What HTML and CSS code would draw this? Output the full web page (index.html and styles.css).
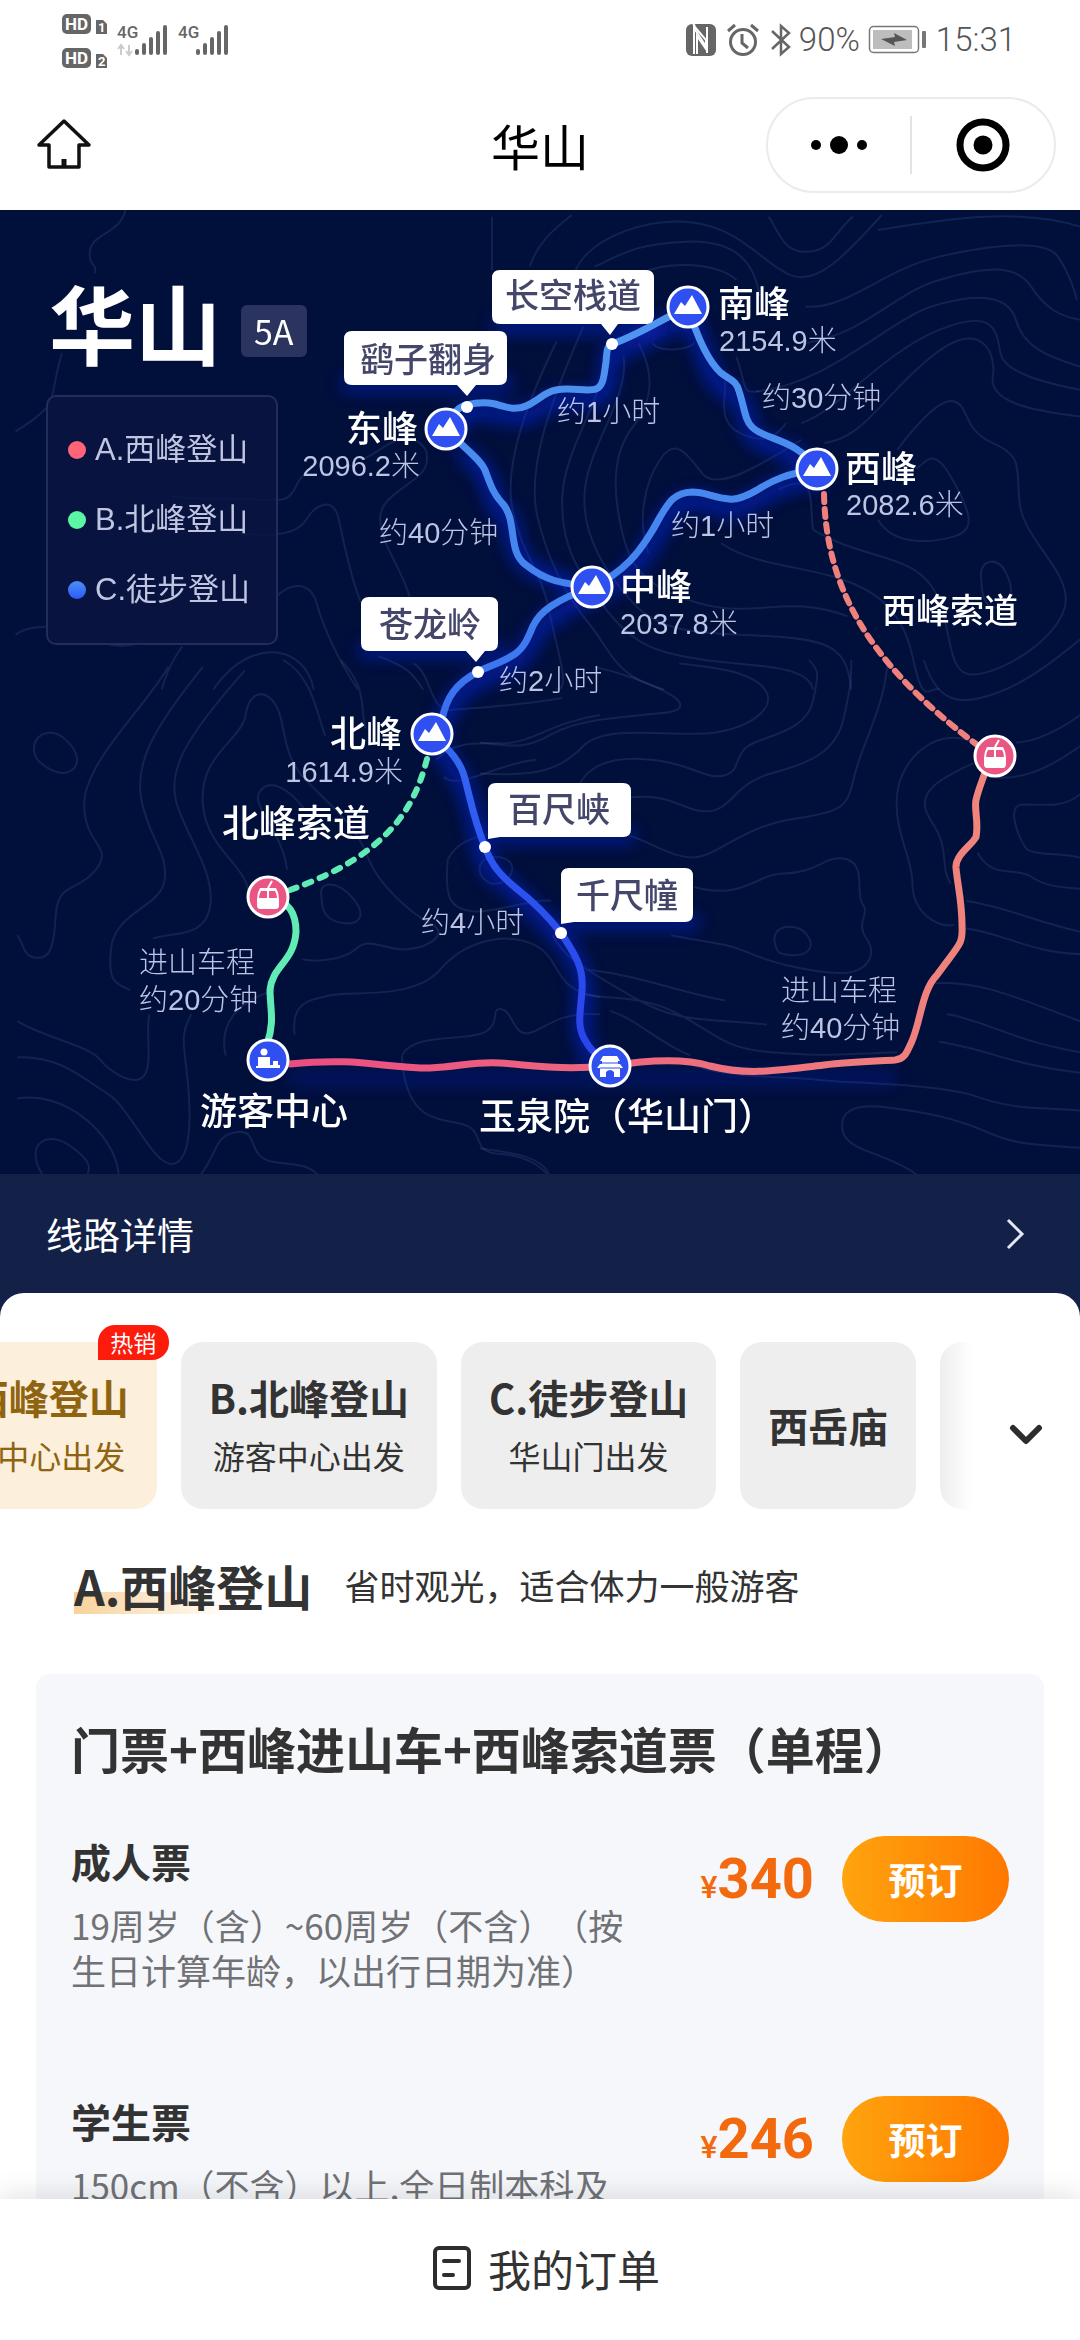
FILE: index.html
```html
<!DOCTYPE html>
<html lang="zh-CN">
<head>
<meta charset="utf-8">
<meta name="viewport" content="width=device-width, initial-scale=1">
<title>华山</title>
<link rel="stylesheet" href="styles.css">
</head>
<body>
<div class="app">
  <header>
    <div class="status">
      <svg class="status-left" width="172" height="60" viewBox="60 10 172 60" role="img" aria-label="信号">
        <g fill="#666">
          <rect x="62" y="14" width="29" height="20" rx="5"/>
          <path d="M96 20h7l4 4v10H96z"/>
          <rect x="62" y="48" width="29" height="20" rx="5"/>
          <path d="M96 54h7l4 4v10H96z"/>
          <rect x="135" y="49" width="4" height="6" rx="2"/><rect x="142" y="43" width="4" height="12" rx="2"/><rect x="149" y="37" width="4" height="18" rx="2"/><rect x="156" y="31" width="4" height="24" rx="2"/><rect x="163" y="25" width="4" height="30" rx="2"/>
          <rect x="196" y="49" width="4" height="6" rx="2"/><rect x="203" y="43" width="4" height="12" rx="2"/><rect x="210" y="37" width="4" height="18" rx="2"/><rect x="217" y="31" width="4" height="24" rx="2"/><rect x="224" y="25" width="4" height="30" rx="2"/>
        </g>
        <path d="M121 55V46M118 49l3-4 3 4M129 45v9M126 51l3 4 3-4" fill="none" stroke="#ccc" stroke-width="2"/>
        <g class="signal-text">
          <text class="knock" x="65" y="30">HD</text><text class="knock" x="65" y="64">HD</text>
          <text class="knock sim" x="98" y="32">1</text><text class="knock sim" x="98" y="66">2</text>
          <text class="net" x="117" y="38">4G</text><text class="net" x="178" y="38">4G</text>
        </g>
      </svg>
      <div class="status-right">
        <svg width="32" height="34" viewBox="0 0 32 34"><rect x="1" y="1" width="30" height="32" rx="6" fill="#666"/><path d="M9 31V5l13 20V8M8 1l2 2M22 4v26" fill="none" stroke="#fff" stroke-width="2"/><path d="M9 3l12 14v9L12 13v18" fill="none" stroke="#fff" stroke-width="2"/></svg>
        <svg class="alarm" width="32" height="34" viewBox="0 0 32 34" fill="none" stroke="#666" stroke-width="3"><circle cx="16" cy="19" r="12.500"/><path d="M15 11v9l6 5M1 8l7-6M24 2l7 6"/></svg>
        <svg class="bt" width="20" height="34" viewBox="0 0 20 34" fill="none" stroke="#666" stroke-width="2.500"><path d="M1 8l17 16-8 7V3l8 7L1 26"/></svg>
        <span>90%</span>
        <svg class="battery" width="60" height="30" viewBox="0 0 60 30"><rect x="1.500" y="1.500" width="49" height="26" rx="4" fill="none" stroke="#777" stroke-width="1.500"/><rect x="5" y="5" width="39" height="19" fill="#bdbdbd"/><path d="M13 14l14-2-1-4 13 7-13 2 1 4z" fill="#555"/><rect x="54" y="6" width="4" height="17" rx="1" fill="#777"/></svg>
        <span>15:31</span>
      </div>
    </div>
    <div class="nav">
      <a class="home" href="#" aria-label="首页"><svg width="56" height="56" viewBox="36 118 56 56" fill="none" stroke="#111"><path d="M64 122L39 146H49V168H79V146H89Z" stroke-width="3.500" stroke-linejoin="round"/><path d="M64 160v8" stroke-width="5"/></svg></a>
      <h1>华山</h1>
      <div class="capsule">
        <button type="button" aria-label="更多"><svg width="60" height="24" viewBox="0 0 60 24"><circle cx="7" cy="12" r="5"/><circle cx="30" cy="12" r="9"/><circle cx="53" cy="12" r="5"/></svg></button>
        <button type="button" aria-label="关闭"><svg width="56" height="56" viewBox="0 0 56 56"><circle cx="28" cy="28" r="23" fill="none" stroke="#000" stroke-width="7"/><circle cx="28" cy="28" r="9.500"/></svg></button>
      </div>
    </div>
  </header>

  <main>
    <section class="map">
      <svg class="routes" viewBox="0 210 1080 964" role="img" aria-label="华山登山线路图">
        <defs>
          <linearGradient id="blue" gradientUnits="userSpaceOnUse" x1="0" y1="320" x2="0" y2="1040"><stop offset="0" stop-color="#4f95f0"/><stop offset=".4" stop-color="#4280ee"/><stop offset=".75" stop-color="#2b55f0"/><stop offset="1" stop-color="#2a45ea"/></linearGradient>
          <linearGradient id="red" gradientUnits="userSpaceOnUse" x1="290" y1="0" x2="980" y2="0"><stop offset="0" stop-color="#ea4d80"/><stop offset="1" stop-color="#f0857c"/></linearGradient>
          <filter id="glow" filterUnits="userSpaceOnUse" x="0" y="210" width="1080" height="964"><feGaussianBlur stdDeviation="9"/></filter>
          <g id="peak"><circle r="20" fill="#2f4ff0" stroke="#fff" stroke-width="3"/><path d="M-14 7L-7-5-3-1 4-12 14 7Z" fill="#fff"/></g>
          <g id="cable"><circle r="20" fill="#ea5583" stroke="#fff" stroke-width="3"/><path d="M0-9L4-16" stroke="#fff" stroke-width="2"/><path d="M-8-9H8Q11-4 11 2V8Q11 12 8 12H-8Q-11 12-11 8V2Q-11-4-8-9Z" fill="#fff"/><path d="M-7-6H-1V1H-9Q-9-3-7-6ZM7-6H1V1H9Q9-3 7-6Z" fill="#ea5583"/></g>
        </defs>
        <rect y="210" width="1080" height="964" fill="#010f3b"/>

        <g class="contour">
          <g transform="translate(0 210) scale(.344 .333)">
            <path d="M365 0C350 70 270 70 262 120S285 160 275 190M180 430C155 510 160 570 130 600S70 650 45 665M45 1275C80 1250 110 1255 140 1250M300 1300C340 1315 390 1310 420 1290"/>
            <path d="M800 1165C840 1120 900 1110 920 1180S970 1330 1040 1440M680 970C780 980 860 980 890 930S970 860 985 930 1020 1110 1050 1180M620 1440C700 1320 790 1320 830 1335S900 1380 912 1440M470 1440C490 1370 510 1340 530 1310M500 860C600 870 760 870 810 870S860 810 880 800M1050 750C1100 730 1120 700 1160 690S1250 700 1240 760 1100 850 1105 930 1170 1080 1190 1160M1430 20V180M1100 1340C1180 1370 1200 1390 1230 1440"/>
          </g>
          <g transform="translate(480 210) scale(.3827 .333)">
            <path d="M130 170C150 100 190 60 240 15M250 180C290 80 440 20 560 38S740 160 810 195 960 130 1050 15M300 170C360 140 400 100 540 95S720 170 730 260M420 190C500 150 620 160 670 210M755 20C790 90 800 130 860 125S930 60 975 20M1040 60C1200 30 1400 -10 1568 50"/>
            <path d="M850 290C960 300 1050 180 1200 140S1480 90 1510 140 1550 230 1560 270M850 400C1010 370 1080 250 1200 210S1400 160 1440 230 1520 320 1568 330M720 545C900 530 1070 330 1180 290S1380 250 1400 330 1480 440 1568 470M840 640C940 600 1050 430 1200 360S1350 370 1360 430 1480 520 1568 540M900 700C1010 680 1050 560 1180 440S1350 430 1340 500 1420 600 1568 620"/>
            <path d="M200 395C130 560 60 760 85 900S160 1080 180 1200 240 1440 200 1440M270 350C190 560 120 770 150 920S240 1180 290 1250 350 1400 480 1440M330 440C320 570 220 720 215 860S250 1080 330 1200 480 1330 580 1350 860 1360 870 1440M375 440C390 560 290 700 275 830S320 1080 400 1180 600 1270 760 1280 960 1320 970 1440M415 400C450 480 460 560 400 650S350 860 370 960 420 1130 570 1180 800 1150 960 1220M450 400C470 430 540 420 560 400M640 480C650 550 610 630 680 670S780 670 800 640M670 440C700 540 680 550 730 545"/>
            <path d="M440 1030C410 930 430 820 470 750S540 730 580 790 740 760 840 690M630 1000C700 1060 830 1070 920 1100S1100 1180 1130 1340 1170 1430 1200 1440M870 960C1000 1050 1120 1030 1180 1130S1210 1400 1290 1395 1520 1280 1530 1180 1420 990 1410 880 1420 740 1340 700 1280 590 1240 575 1130 660 1090 720M1040 930C1080 1010 1180 1000 1240 980S1280 900 1230 800 1160 770 1140 775M1310 1110C1300 1050 1350 1040 1370 1080S1400 1170 1360 1190 1310 1150 1310 1110M780 840C880 780 860 870 870 960"/>
          </g>
          <g transform="translate(0 660) scale(.3827 .344)">
            <path d="M90 270C80 220 130 190 170 230S210 310 180 325 95 300 90 270M440 20C370 150 220 300 220 420S300 540 250 610 150 640 145 750 120 870 90 865 60 820 45 800M530 20C400 200 350 300 370 410S440 560 430 640 300 730 290 840 310 940 340 960M640 30C480 230 440 320 460 410S560 610 550 710 450 790 400 810"/>
            <path d="M640 170C650 90 690 80 720 130S730 270 800 350 930 480 960 570 1080 740 1130 770 1100 850 1040 840 960 810 930 840 830 880 790 870M750 610C740 500 650 420 680 380S760 380 800 440M640 170C620 240 520 280 530 420S660 600 650 700M740 0C820 50 830 170 850 220M890 0C960 80 940 130 955 200M840 690C830 640 880 640 920 690S940 770 900 765 840 740 840 690"/>
            <path d="M770 1090C760 1000 800 990 860 975S1080 990 1150 900 1330 790 1400 830 1440 960 1568 980M590 1150C570 1060 620 990 720 960M1050 1150C1080 1080 1230 1110 1270 1080S1280 1010 1310 1015 1340 1090 1380 1085 1450 1020 1568 1030M1050 1150C1060 1350 1150 1330 1210 1350S1230 1430 1300 1435 1410 1470 1430 1495"/>
            <path d="M45 1050C120 1100 230 1120 260 1160S350 1240 375 1210 380 1080 390 1030M45 1155C160 1150 220 1220 280 1260S400 1470 450 1465 500 1330 490 1220 470 1090 500 1030M45 1275C160 1250 300 1370 310 1495M110 1495C60 1400 130 1370 180 1410S240 1470 228 1495M525 1495C570 1430 560 1380 620 1372S640 1450 720 1460 800 1470 830 1495"/>
            <path d="M1170 580C1200 510 1280 510 1330 490M1255 620C1240 560 1330 560 1338 600S1280 680 1255 620M1170 580C1160 700 1180 720 1230 730S1400 690 1440 700M1080 10C1130 40 1120 150 1180 145S1380 130 1470 110M1140 290C1200 220 1280 250 1340 240S1450 180 1568 160M1160 340C1200 380 1300 300 1400 290"/>
          </g>
          <g transform="translate(480 660) scale(.3827 .344)">
            <path d="M0 240C80 250 120 260 180 220S320 170 470 155 420 50 300 20M0 330C150 340 210 320 270 250S520 230 620 210 780 130 740 80 600 20 520 10M260 360C300 280 400 280 480 295S600 350 640 335 660 300 690 260 850 220 870 120 880 30 860 0M340 410C500 370 520 440 590 440S660 360 760 330 930 270 950 170 970 60 970 0M390 510C450 530 520 590 580 570S700 480 830 460 960 420 980 330 1060 130 1065 0"/>
            <path d="M560 660C690 700 720 620 800 620S910 560 960 580 980 680 1000 710 980 760 1010 810 1010 910 940 910 760 880 700 850 580 820 500 800M770 820C760 770 830 760 855 800S850 860 815 858 775 850 770 820M280 900C430 920 500 960 640 990M190 800C220 870 280 900 400 980S600 1040 750 1060M270 970C330 990 420 970 520 1030S640 1130 760 1140 880 1150 1090 1140"/>
            <path d="M340 1020C420 1050 460 1110 550 1150M540 1170C640 1220 820 1210 880 1220S1200 1230 1300 1270 1480 1300 1568 1310M1140 1495C1060 1430 960 1430 948 1370S980 1290 1060 1300 1240 1330 1320 1370 1450 1410 1568 1418M0 1420C70 1430 160 1440 180 1495M1190 940C1300 930 1400 980 1568 1050M1220 1030C1300 1040 1400 1110 1568 1140M1200 1110C1320 1130 1400 1180 1568 1200"/>
            <path d="M1290 240C1200 190 1100 280 1090 390S1130 570 1130 650 1190 780 1240 770M1290 300C1190 350 1130 390 1180 470S1200 600 1230 650M1300 560C1340 640 1400 600 1440 630S1520 660 1568 665M1568 390C1530 430 1470 420 1420 420S1410 520 1425 545 1530 560 1568 575M1160 0C1190 110 1240 130 1310 110S1450 50 1568 -60M1270 700C1380 720 1450 760 1568 790M1270 780C1380 800 1440 850 1568 855M1330 340C1400 350 1470 330 1568 250M1400 240C1450 240 1520 200 1568 160"/>
          </g>
        </g>

        <g id="lines" fill="none" stroke-linecap="round">
          <g filter="url(#glow)" stroke="#0a2cff" stroke-width="11" transform="translate(2 8)" opacity=".75">
            <path d="M446 429C455 410 463 404 475 403S503 409 516 409 540 398 553 392 592 397 602 385 602 344 612 344 664 320 688 307C701 345 709 372 721 380S740 390 744 407 748 430 760 434 795 444 817 469C786 474 772 480 748 495S709 493 692 492 667 504 653 530 618 576 592 587C560 570 525 568 515 543S514 516 500 504 494 466 463 446M592 587C560 600 540 612 530 633S510 658 478 672 440 720 432 734M432 734C463 770 468 790 474 815S480 860 496 870 550 921 561 933 583 970 582 990 574 1030 593 1053"/>
            <path d="M290 1070H890" opacity=".4"/>
            <path d="M345 376H505M495 318H652M362 642H496M492 828H628M565 914H692" opacity=".8"/>
          </g>
          <path stroke="url(#blue)" stroke-width="7" d="M446 429C452 413 460 406 467 405C478 402 486 402 495 404C506 407 515 411 526 406C540 400 544 392 556 390C570 387 588 392 596 389C604 386 604 374 606 362C607 350 607 346 612 344C636 336 655 323 688 307C698 340 709 362 721 373C730 380 736 380 739 391C745 410 745 420 752 427C764 440 796 438 817 469C786 474 774 480 762 487C748 496 737 500 729 499C714 498 706 492 692 492C674 493 669 502 660 517C640 555 622 573 592 587"/>
          <path stroke="url(#blue)" stroke-width="7" d="M446 429C466 450 480 459 485 470C491 486 493 493 502 503C518 520 507 552 526 565C546 581 560 583 592 587C556 600 540 611 533 626C528 638 524 648 515 654C500 664 486 667 478 672C456 683 446 698 442 720L432 734C450 750 461 762 465 779C470 798 474 820 485 847C492 866 500 875 517 889C535 903 547 915 561 933C575 954 584 968 582 990C581 1010 576 1026 585 1040C590 1050 598 1056 610 1066"/>
          <path stroke="#62ecb5" stroke-width="7" d="M268 897C290 901 296 914 296 932C294 962 272 966 270 990C270 1008 275 1022 267 1044"/>
          <path stroke="#62ecb5" stroke-width="6" stroke-dasharray="7 9" d="M427 759C416 800 396 852 290 890"/>
          <path stroke="url(#red)" stroke-width="7" d="M290 1064C360 1057 382 1068 430 1068C458 1067 476 1061 500 1063C540 1066 560 1070 610 1066C660 1058 690 1060 710 1066C750 1076 780 1070 824 1065C850 1062 880 1061 895 1060C905 1059 907 1052 912 1041C921 1020 922 990 937 975C960 943 963 945 962 925C962 902 958 888 956 868C955 855 972 845 976 837C979 822 974 810 976 800C979 787 982 782 988 764"/>
          <path stroke="#f0807c" stroke-width="6" stroke-dasharray="8 7" d="M824 494C826 580 860 657 976 744"/>
        </g>
        <g fill="#fff"><circle cx="612" cy="344" r="6"/><circle cx="467" cy="407" r="6"/><circle cx="478" cy="672" r="6"/><circle cx="485" cy="847" r="6"/><circle cx="561" cy="933" r="6"/></g>
        <use href="#peak" x="688" y="307"/><use href="#peak" x="817" y="469"/><use href="#peak" x="592" y="587"/><use href="#peak" x="446" y="429"/><use href="#peak" x="432" y="734"/>
        <use href="#cable" x="268" y="897"/><use href="#cable" x="995" y="756"/>
        <g transform="translate(268 1060)"><circle r="20" fill="#2f4ff0" stroke="#fff" stroke-width="3"/><path d="M-10-3H2V5H5V1H10V5H12V8H-12V6H-10Z" fill="#fff"/><circle cx="-4" cy="-8" r="3.500" fill="#fff"/></g>
        <g transform="translate(610 1066)"><circle r="20" fill="#2f4ff0" stroke="#fff" stroke-width="3"/><path d="M-7-10H7L10-5H8V-2H10L13 2H10V11H4V6Q0 2-4 6V11H-10V2H-13L-10-2H-8V-5H-10Z" fill="#fff"/><path d="M-8-3H8M-10 2H10" stroke="#2f4ff0"/></g>

        <g fill="#fff">
          <path d="M500 270H646Q654 270 654 278V316Q654 324 646 324H618L610 335 601 324H500Q492 324 492 316V278Q492 270 500 270Z"/>
          <path d="M352 331H499Q507 331 507 339V377Q507 385 499 385H476L467 396 457 385H352Q344 385 344 377V339Q344 331 352 331Z"/>
          <path d="M369 597H490Q498 597 498 605V643Q498 651 490 651H485L476 662 466 651H369Q361 651 361 643V605Q361 597 369 597Z"/>
          <path d="M496 783H623Q631 783 631 791V829Q631 837 623 837H500L488 839V791Q488 783 496 783Z"/>
          <path d="M569 868H685Q693 868 693 876V914Q693 922 685 922H574L561 924V876Q561 868 569 868Z"/>
        </g>
        <g class="bubble-text">
          <text x="573" y="308">长空栈道</text><text x="428" y="372">鹞子翻身</text><text x="430" y="637">苍龙岭</text><text x="559" y="822">百尺峡</text><text x="627" y="908">千尺幢</text>
        </g>
        <g class="place">
          <text x="718" y="317">南峰</text><text x="845" y="482">西峰</text><text x="620" y="600">中峰</text><text class="cableway" x="882" y="623">西峰索道</text>
          <text class="end" x="418" y="442">东峰</text><text class="end" x="402" y="747">北峰</text>
          <text class="wide" x="222" y="837">北峰索道</text><text class="wide" x="200" y="1125">游客中心</text><text class="wide" x="479" y="1130">玉泉院（华山门）</text>
        </g>
        <g class="note">
          <text x="719" y="351">2154.9米</text><text x="846" y="515">2082.6米</text><text x="620" y="634">2037.8米</text>
          <text class="end" x="420" y="476">2096.2米</text><text class="end" x="403" y="782">1614.9米</text>
          <text x="762" y="408">约30分钟</text><text x="557" y="422">约1小时</text><text x="671" y="536">约1小时</text><text x="379" y="543">约40分钟</text><text x="499" y="691">约2小时</text><text x="421" y="933">约4小时</text>
          <text x="139" y="973">进山车程</text><text x="139" y="1010">约20分钟</text><text x="781" y="1001">进山车程</text><text x="781" y="1038">约40分钟</text>
        </g>
      </svg>
      <div class="map-info">
        <div class="map-title"><h2>华山</h2><span class="grade">5A</span></div>
        <ul class="legend">
          <li><i class="dot red"></i>A.西峰登山</li>
          <li><i class="dot green"></i>B.北峰登山</li>
          <li><i class="dot blue"></i>C.徒步登山</li>
        </ul>
      </div>
    </section>

    <a class="detail" href="#">线路详情<svg width="22" height="34" viewBox="0 0 22 34" fill="none" stroke="#e4e8f5" stroke-width="3"><path d="M4 3l14 14L4 31"/></svg></a>

    <section class="panel">
      <div class="tabs">
        <div class="tab-scroll">
          <button class="tab active" type="button"><b>A.西峰登山</b><span>游客中心出发</span><em>热销</em></button>
          <button class="tab" type="button"><b>B.北峰登山</b><span>游客中心出发</span></button>
          <button class="tab" type="button"><b>C.徒步登山</b><span>华山门出发</span></button>
          <button class="tab" type="button"><b>西岳庙</b></button>
          <button class="tab next" type="button" aria-label="更多景点"></button>
        </div>
        <button class="expand" type="button" aria-label="展开"><svg width="36" height="24" viewBox="0 0 36 24" fill="none" stroke="#2d2d2d" stroke-width="6" stroke-linecap="round" stroke-linejoin="round"><path d="M5 5l13 13L31 5"/></svg></button>
      </div>

      <div class="route-head"><h3>A.西峰登山</h3><p>省时观光，适合体力一般游客</p></div>

      <article class="card">
        <h4>门票+西峰进山车+西峰索道票（单程）</h4>
        <div class="ticket">
          <div class="desc"><h5>成人票</h5><p>19周岁（含）~60周岁（不含）（按生日计算年龄，以出行日期为准）</p></div>
          <div class="buy"><span class="price"><small>¥</small>340</span><button type="button">预订</button></div>
        </div>
        <div class="ticket">
          <div class="desc"><h5>学生票</h5><p>150cm（不含）以上,全日制本科及</p></div>
          <div class="buy"><span class="price"><small>¥</small>246</span><button type="button">预订</button></div>
        </div>
      </article>
    </section>
  </main>

  <footer>
    <a href="#"><svg width="40" height="46" viewBox="0 0 40 46" fill="none" stroke="#2d2d2d" stroke-width="4" stroke-linecap="round"><rect x="3" y="3" width="34" height="40" rx="4"/><path d="M12 16h15M12 30h9"/></svg>我的订单</a>
  </footer>
</div>
</body>
</html>
```

FILE: styles.css
```css
* { box-sizing: border-box; margin: 0; padding: 0; }
body {
  font-family: "Noto Sans CJK SC", "Noto Sans", sans-serif;
  color: #333;
  background: #fff;
  text-spacing-trim: space-all;
}
a { color: inherit; text-decoration: none; }
button { font: inherit; color: inherit; border: 0; background: none; cursor: pointer; }
ul { list-style: none; }
svg { display: block; flex: none; }

.app { display: flex; flex-direction: column; height: 100vh; }

/* status bar */
.status { display: flex; justify-content: space-between; align-items: center; height: 80px; padding: 0 64px 0 60px; }
.status-right { display: flex; align-items: center; gap: 8px; font: 300 33px/40px Roboto, sans-serif; color: #555; }
.alarm { margin-left: 2px; }
.bt { margin-left: 4px; }
.signal-text { font-family: Roboto, sans-serif; font-weight: 700; }
.knock { fill: #fff; font-size: 17px; }
.sim { font-size: 13px; }
.net { fill: #666; font-size: 17px; font-weight: 500; }

/* navigation */
.nav { display: grid; grid-template-columns: 1fr auto 1fr; align-items: center; height: 130px; padding: 0 24px; }
.nav h1 { font-size: 49px; line-height: 72px; font-weight: 400; color: #000; }
.home { justify-self: start; margin-left: 12px; }
.capsule { justify-self: end; display: flex; align-items: center; width: 290px; height: 96px; border: 2px solid #ebebeb; border-radius: 48px; }
.capsule button { flex: 1; display: flex; align-items: center; justify-content: center; height: 58px; }
.capsule button + button { border-left: 2px solid #e2e2e2; }

main { flex: 1; min-height: 0; overflow: hidden; }

/* route map */
.map { display: grid; background: #010f3b; }
.map > * { grid-area: 1 / 1; }
.routes { width: 100%; height: auto; }
.routes text { font-family: "Liberation Sans", "Noto Sans CJK SC", sans-serif; }
.contour { fill: none; stroke: #5f78b4; stroke-opacity: .19; }
.contour path { vector-effect: non-scaling-stroke; stroke-width: 2px; }
.bubble-text { font-size: 34px; font-weight: 500; fill: #44466a; text-anchor: middle; }
.place { font-size: 36px; font-weight: 500; fill: #fff; }
.place .cableway { font-size: 34px; }
.place .wide { font-size: 37px; }
.note { font-size: 29px; font-weight: 300; fill: #bdc4e4; }
.end { text-anchor: end; }
.map-info { justify-self: start; align-self: start; padding: 50px 46px; position: relative; }
.map-title { display: flex; align-items: center; gap: 20px; padding-left: 3px; }
.map-title h2 { font-size: 86px; line-height: 124px; font-weight: 700; color: #fff; }
.grade { margin-top: 18px; padding: 0 13px; border-radius: 6px; background: #2b345f; color: #fff; font-size: 34px; line-height: 52px; }
.legend { display: flex; flex-direction: column; gap: 24px; margin-top: 11px; width: 232px; padding: 30px 0 30px 20px; border: 2px solid #232d5c; border-radius: 10px; background: #0a1441cc; }
.legend li { display: flex; align-items: center; gap: 9px; font: 400 31px/46px "Liberation Sans", "Noto Sans CJK SC", sans-serif; color: #c0c6e2; }
.dot { width: 18px; height: 18px; border-radius: 50%; }
.red { background: #ff6478; }
.green { background: #5af5a5; }
.blue { background: linear-gradient(#4d8ef8, #2a5cf5); }

.detail { display: flex; justify-content: space-between; align-items: center; padding: 32px 54px 60px 46px; background: #132149; color: #fff; font-size: 37px; line-height: 56px; }

/* sheet */
.panel { position: relative; margin-top: -29px; border-radius: 24px 24px 0 0; background: #fff; }
.tabs { display: flex; align-items: center; }
.tab-scroll { position: relative; flex: 1; display: flex; gap: 24px; overflow: hidden; padding-top: 49px; }
.tab-scroll::after { content: ""; position: absolute; top: 0; right: 0; bottom: 0; width: 32px; background: linear-gradient(90deg, #fff0, #fff); }
.tab { position: relative; flex: none; display: flex; flex-direction: column; align-items: center; justify-content: center; height: 167px; padding: 0 28px 2px; border-radius: 22px; background: #eee; }
.tab b { font-size: 40px; line-height: 60px; }
.tab span { font-size: 32px; line-height: 56px; }
.tab.active { margin-left: -98px; background: #fcefdb; color: #8f6411; }
.tab.next { width: 120px; }
.tab em { position: absolute; top: -17px; right: -12px; width: 71px; border-radius: 17px 17px 17px 0; background: #fd1b0b; color: #fff; font-size: 23px; line-height: 35px; font-style: normal; text-align: center; }
.expand { align-self: flex-end; display: flex; justify-content: center; align-items: center; width: 108px; height: 148px; }

.route-head { display: flex; align-items: center; gap: 32px; padding: 41px 74px 0; }
.route-head h3 { font-size: 48px; line-height: 70px; background: linear-gradient(90deg, #f8d29b, #fff0) 0 42px / 160px 22px no-repeat; }
.route-head p { font-size: 35px; line-height: 70px; }

.card { margin: 54px 36px 0; padding: 42px 35px 60px; border-radius: 14px; background: #f6f7fb; }
.card h4 { font-size: 49px; line-height: 64px; }
.ticket { display: flex; justify-content: space-between; padding-top: 56px; }
.ticket + .ticket { padding-top: 104px; }
.desc { flex: 0 1 564px; }
.desc h5 { font-size: 40px; line-height: 50px; }
.desc p { margin-top: 16px; font-size: 35px; line-height: 45px; color: #707276; }
.buy { display: flex; align-items: center; gap: 28px; height: 86px; }
.price { padding-top: 8px; font: 700 56px/64px Roboto, sans-serif; color: #f36a0e; }
.price small { font-size: 32px; font-weight: 500; }
.buy button { width: 167px; height: 86px; border-radius: 43px; background: linear-gradient(90deg, #ffa40e, #ff7800); color: #fff; font-size: 37px; font-weight: 700; }

footer { position: relative; display: flex; justify-content: center; padding: 37px 0 40px 12px; background: #fff; box-shadow: 0 -6px 24px #0000001a; }
footer a { display: flex; align-items: center; gap: 16px; font-size: 43px; line-height: 64px; }
```
